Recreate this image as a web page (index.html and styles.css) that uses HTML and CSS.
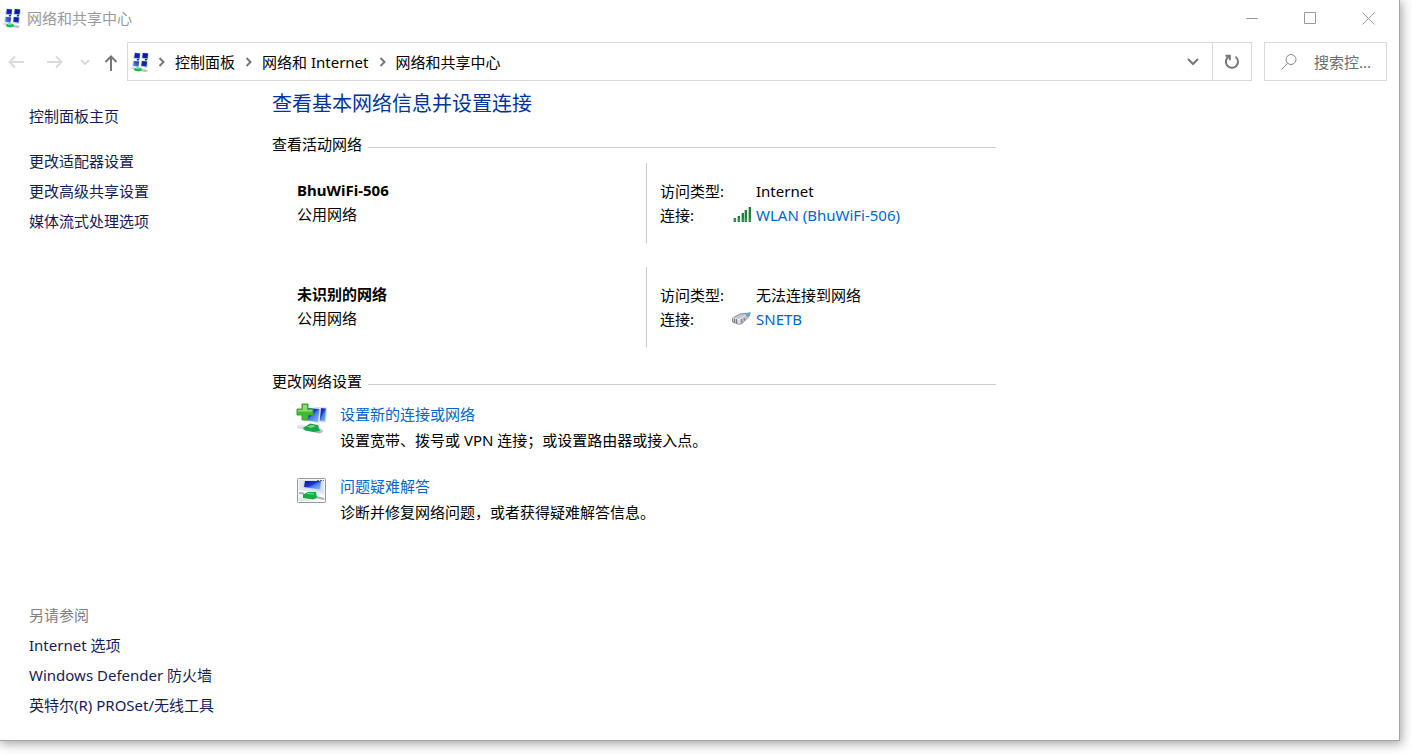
FILE: index.html
```html
<!DOCTYPE html>
<html lang="zh-CN">
<head>
<meta charset="utf-8">
<title>网络和共享中心</title>
<link rel="stylesheet" href="styles.css">
</head>
<body>
<svg class="symbols" aria-hidden="true">
  <defs>
    <linearGradient id="screen" x1="0" y1="0" x2="1" y2="1"><stop offset="0" stop-color="#0a1696"/><stop offset=".45" stop-color="#1a38c8"/><stop offset=".55" stop-color="#4a7ce4"/><stop offset="1" stop-color="#8fc0f6"/></linearGradient>
    <linearGradient id="pane" x1="1" y1="0" x2="0" y2="1"><stop offset="0" stop-color="#0a1696"/><stop offset=".6" stop-color="#1226b4"/><stop offset="1" stop-color="#5f94ec"/></linearGradient>
    <linearGradient id="pipe" x1="0" y1="0" x2="0" y2="1"><stop offset="0" stop-color="#f4f6f8"/><stop offset="1" stop-color="#a9b0b6"/></linearGradient>
    <symbol id="network" viewBox="0 0 20 20">
      <path d="M4 .5l6.500.5-.8 6.500L3.300 7zM12 .5l6.800.5-.8 6.500L11.500 7zM3 8.500l6.500.5-.8 6L2.200 14.500zM11.200 8.500l6.800.5-.8 7-6.300-1z" fill="#bcd0f2"/>
      <path d="M5 1l5 .5-.5 5-5.300-.8zM13 1l5 .5-.5 5-5.300-.8zM4 9l5 .5-.5 5-5.300-.8zM12 9l5 .5-.5 5-5.300-.8z" fill="url(#pane)"/>
      <path d="M7 7h2l-.2 1.500h-2zM15 7h2l-.2 1.500h-2z" fill="#1226b4"/>
      <path d="M0 14.500l3-.5 3 1.500 9 1.500 3 1.500-2 1.500-4-.7L1 16.500z" fill="url(#pipe)"/>
      <path d="M3.500 17.300l3-1.800 4.500.3 1 2.500-3.500 1.200-3.500-.8z" fill="#14b84c"/><path d="M6 16.500l4 .2" stroke="#6fe39a" fill="none"/>
    </symbol>
  </defs>
</svg>
<div class="window">
  <header class="titlebar">
    <svg class="app-icon" width="20" height="20"><use href="#network"/></svg>
    <span class="title">网络和共享中心</span>
    <button class="caption" aria-label="最小化"><svg width="13" height="13" viewBox="0 0 13 13"><path d="M0 6.500h12"/></svg></button>
    <button class="caption" aria-label="最大化"><svg width="13" height="13" viewBox="0 0 13 13"><path d="M.5.5h11v11H.5z"/></svg></button>
    <button class="caption" aria-label="关闭"><svg width="13" height="13" viewBox="0 0 13 13"><path d="M.5.5l12 12m0-12l-12 12"/></svg></button>
  </header>

  <div class="toolbar">
    <nav class="history" aria-label="导航">
      <button class="nav-button back" disabled aria-label="后退"><svg width="16" height="14" viewBox="0 0 16 14"><path d="M16 7H1.500M7 1.500L1.500 7 7 12.500"/></svg></button>
      <button class="nav-button forward" disabled aria-label="前进"><svg width="16" height="14" viewBox="0 0 16 14"><path d="M0 7h14.500M9 1.500L14.500 7 9 12.500"/></svg></button>
      <button class="nav-button recent" disabled aria-label="最近位置"><svg width="10" height="8" viewBox="0 0 10 8"><path d="M1 2l4 4 4-4"/></svg></button>
      <button class="nav-button up" aria-label="向上"><svg width="14" height="18" viewBox="0 0 14 18"><path d="M7 18V3.500M1.500 9L7 3.500 12.500 9"/></svg></button>
    </nav>
    <div class="address">
      <svg class="address-icon" width="20" height="20"><use href="#network"/></svg>
      <svg class="crumb-arrow" width="7" height="10" viewBox="0 0 7 10"><path d="M1.500 1l4 4-4 4"/></svg>
      <a class="crumb" href="#">控制面板</a>
      <svg class="crumb-arrow" width="7" height="10" viewBox="0 0 7 10"><path d="M1.500 1l4 4-4 4"/></svg>
      <a class="crumb" href="#">网络和 Internet</a>
      <svg class="crumb-arrow" width="7" height="10" viewBox="0 0 7 10"><path d="M1.500 1l4 4-4 4"/></svg>
      <a class="crumb" href="#">网络和共享中心</a>
      <button class="address-button drop" aria-label="以前的位置"><svg width="12" height="8" viewBox="0 0 12 8"><path d="M1 1l5 5 5-5"/></svg></button>
      <button class="address-button refresh" aria-label="刷新"><svg width="16" height="16" viewBox="0 0 16 16"><path d="M11.500 2.800A6.100 6.100 0 1 1 5 2.400"/><path d="M1.500 1.800h4.300v4.500"/></svg></button>
    </div>
    <label class="search">
      <svg width="16" height="16" viewBox="0 0 16 16"><circle cx="10" cy="5.500" r="5"/><path d="M6.500 9.500L.5 15.500"/></svg>
      <input class="search-input" type="text" placeholder="搜索控..." aria-label="搜索控制面板">
    </label>
  </div>

  <div class="content">
    <aside class="sidebar">
      <a class="side-link" href="#">控制面板主页</a>
      <nav class="side-group tasks">
        <a class="side-link" href="#">更改适配器设置</a>
        <a class="side-link" href="#">更改高级共享设置</a>
        <a class="side-link" href="#">媒体流式处理选项</a>
      </nav>
      <nav class="side-group related">
        <span class="side-heading">另请参阅</span>
        <a class="side-link" href="#">Internet 选项</a>
        <a class="side-link" href="#">Windows Defender 防火墙</a>
        <a class="side-link" href="#">英特尔(R) PROSet/无线工具</a>
      </nav>
    </aside>

    <main class="main">
      <h1 class="heading">查看基本网络信息并设置连接</h1>

      <h2 class="section-title">查看活动网络</h2>
      <div class="networks">
        <section class="network">
          <div class="identity">
            <h3 class="network-name">BhuWiFi-506</h3>
            <p class="network-type">公用网络</p>
          </div>
          <dl class="details">
            <dt>访问类型:</dt><dd>Internet</dd>
            <dt>连接:</dt>
            <dd><a class="link connection" href="#"><svg class="connection-icon" width="20" height="16" viewBox="0 0 20 16"><path d="M1 11h3v4H1zM5 9h3v6H5zM9 6h3v9H9zM12 3h3v12h-3zM16 0h3v15h-3z" fill="#a9d1b0"/><path d="M2 11h2v4H2zM6 9h2v6H6zM10 6h2v9h-2zM13 3h2v12h-2zM17 0h2v15h-2z" fill="#1d7f3e"/><path d="M1 13h18" stroke="#8fca9b" stroke-opacity=".6"/></svg>WLAN (BhuWiFi-506)</a></dd>
          </dl>
        </section>
        <section class="network">
          <div class="identity">
            <h3 class="network-name">未识别的网络</h3>
            <p class="network-type">公用网络</p>
          </div>
          <dl class="details">
            <dt>访问类型:</dt><dd>无法连接到网络</dd>
            <dt>连接:</dt>
            <dd><a class="link connection" href="#"><svg class="connection-icon" width="20" height="16" viewBox="0 0 20 16"><path d="M.5 7L8 3l10-1-1 3.500-7.500 7.500H6L.5 11z" fill="#c4c6cf" stroke="#8b8c96"/><path d="M1 7l6 1.500L16 3M7 8.500V13" fill="none" stroke="#eff0f5"/><path d="M2.500 7.500v4M4.500 8v4.500M9.500 8l.5 4M12 6.500l.5 3" stroke="#777984" fill="none"/><path d="M13 3l6-2-2 4-2 1z" fill="#5aabd8"/></svg>SNETB</a></dd>
          </dl>
        </section>
      </div>

      <h2 class="section-title">更改网络设置</h2>
      <ul class="actions">
        <li class="action">
          <svg class="action-icon" width="32" height="32" viewBox="0 0 32 32">
            <path d="M19 4l12 .5-1 15-10-.5z" fill="#d3dcea"/><path d="M23 5l7 .5-1 12.500-6-.5z" fill="url(#screen)"/>
            <path d="M9 4l16 1-1.500 15.500L8 18z" fill="#e1e7ef"/><path d="M10 5l13.500 1L22 19 9 17z" fill="url(#screen)"/>
            <path d="M1 22l5-1 4 2h8l8 3 1 3-4 1.500L1 25z" fill="url(#pipe)"/><path d="M7 25l7-4.500 8 1.500 2 6-6 1-9-1.500z" fill="#1ba64a"/><path d="M11 23.500l5-1.500 4 1-5 2z" fill="#72dc83"/>
            <path d="M6 1h6v5h5v6h-5v5H6v-5H1V6h5z" fill="#45b83b" stroke="#3aa233"/><path d="M7 2h4v5h5v1.500H2V7h5z" fill="#8fdc72"/>
          </svg>
          <div class="action-text">
            <a class="link" href="#">设置新的连接或网络</a>
            <p class="description">设置宽带、拨号或 VPN 连接；或设置路由器或接入点。</p>
          </div>
        </li>
        <li class="action">
          <svg class="action-icon" width="32" height="32" viewBox="0 0 32 32">
            <rect x="1.500" y="3.500" width="28" height="24" rx="1" fill="#f6f7f8" stroke="#96999c"/>
            <rect x="3" y="5" width="25" height="21" fill="#e3e7eb"/>
            <path d="M8 5.500h19l-1.500 11L6 13z" fill="#cedaf0"/><path d="M9 6h16l-1 8.500-16-2.500z" fill="url(#screen)"/>
            <path d="M3 15l6 1 19 3v7H15L3 22z" fill="#f9fafb"/><path d="M3 18l5 .5M20 22l8 2" stroke="#a8afb5" stroke-width="2" fill="none"/>
            <path d="M7 19.500l5-2.500h8l1 6-4 1.500-10-1.500z" fill="#16ad45"/><path d="M11 18.500l7 .5" stroke="#7ce193"/>
            <path d="M21 5.500h7" stroke="#667" stroke-dasharray="2 1"/>
          </svg>
          <div class="action-text">
            <a class="link" href="#">问题疑难解答</a>
            <p class="description">诊断并修复网络问题，或者获得疑难解答信息。</p>
          </div>
        </li>
      </ul>
    </main>
  </div>
</div>
</body>
</html>
```
FILE: styles.css
```css
* { box-sizing: border-box; margin: 0; padding: 0; }
body {
  min-height: 100vh;
  display: flex;
  padding: 0 12px 15px 0;
  background: #fff;
  color: #000;
  font: 15px/24px "Noto Sans", "Noto Sans CJK SC", sans-serif;
}
a { color: inherit; text-decoration: none; }
a:hover { text-decoration: underline; }
button { border: 0; background: none; font: inherit; }
svg { flex: none; display: block; }
.symbols { position: absolute; width: 0; height: 0; }
.window {
  flex: 1;
  min-width: 0;
  display: flex;
  flex-direction: column;
  border: solid #a3a3a3;
  border-width: 0 1px 1px 0;
  box-shadow: 1px 2px 10px 1px rgba(0, 0, 0, .35);
}

.titlebar { display: flex; align-items: center; height: 36px; padding-right: 2px; }
.app-icon { margin: 0 5px 0 2px; }
.title { flex: 1; color: #999; }
.caption { display: grid; place-items: center; width: 58px; height: 36px; }
.caption path { fill: none; stroke: #999; }

.toolbar { display: flex; align-items: center; margin-top: 6px; padding-right: 12px; }
.history { display: flex; align-items: center; width: 127px; padding-left: 8px; }
.nav-button path { fill: none; stroke: #dadada; stroke-width: 2; }
.forward { margin-left: 23px; }
.recent { margin-left: 17px; }
.up { margin-left: 14px; }
.up path { stroke: #777; }
.address { flex: 1; display: flex; align-items: center; height: 39px; border: 1px solid #d9d9d9; }
.address-icon { margin: 0 8px 0 2px; }
.crumb-arrow { margin-right: 10px; }
.crumb-arrow path { fill: none; stroke: #777; stroke-width: 2; }
.crumb { margin-right: 10px; }
.address-button { display: grid; place-items: center; width: 39px; height: 37px; }
.address-button path { fill: none; stroke: #777; stroke-width: 2; }
.drop { margin-left: auto; }
.refresh { border-left: 1px solid #d9d9d9; }
.search { display: flex; align-items: center; gap: 17px; width: 123px; height: 39px; margin-left: 12px; padding-left: 16px; border: 1px solid #d9d9d9; }
.search svg { fill: none; stroke: #888; }
.search-input { flex: 1; min-width: 0; border: 0; outline: 0; background: none; font: inherit; }
.search-input::placeholder { color: #6d6d6d; opacity: 1; }

.content { flex: 1; display: flex; }
.sidebar { display: flex; flex-direction: column; width: 272px; padding: 20px 12px 20px 29px; line-height: 30px; }
.side-group { display: flex; flex-direction: column; }
.tasks { margin-top: 15px; }
.related { margin-top: auto; }
.side-link { color: #151c55; }
.side-heading { color: #808080; }

.main { flex: 1; max-width: 724px; padding-top: 9px; }
.heading { margin-bottom: 16px; color: #039; font-size: 20px; font-weight: 400; line-height: 28px; }
.section-title { display: flex; align-items: center; gap: 6px; font-size: 15px; font-weight: 400; line-height: 20px; }
.section-title::after { content: ""; flex: 1; height: 1px; margin-top: 6px; background: #ccc; }
.networks { display: grid; gap: 24px; margin: 9px 0 24px; }
.network { display: grid; grid-template-columns: 374px 1fr; }
.identity { padding: 15px 0 16px 25px; }
.network-name { font-size: 15px; font-weight: 700; line-height: 24px; }
.details { display: grid; grid-template-columns: 96px 1fr; padding: 16px 0 16px 13px; border-left: 1px solid #ccc; }
.link { color: #06c; }
.connection { display: flex; align-items: center; gap: 4px; margin-left: -24px; }
.actions { display: grid; gap: 20px; margin-top: 10px; padding-left: 24px; list-style: none; }
.action { display: flex; gap: 12px; line-height: 26px; }
.action-icon { margin-top: 2px; }
```
